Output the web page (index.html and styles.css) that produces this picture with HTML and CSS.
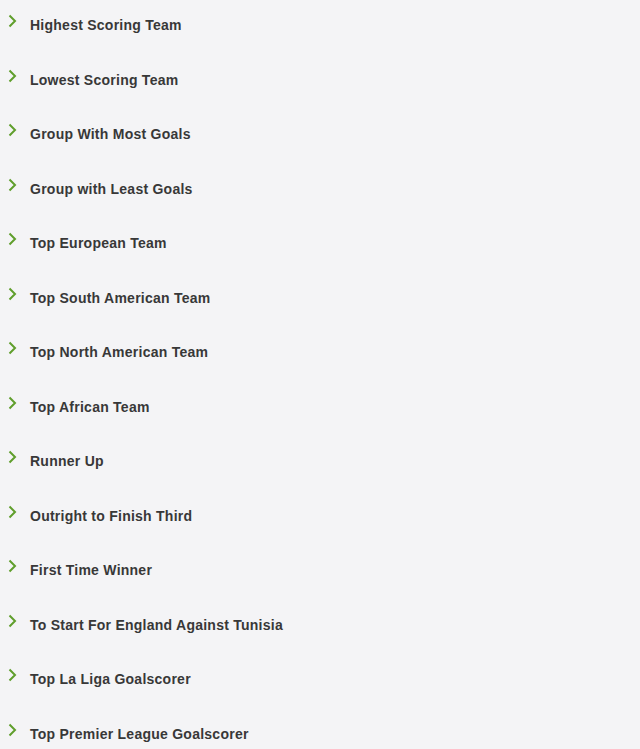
FILE: index.html
```html
<!DOCTYPE html>
<html lang="en">
<head>
    <meta charset="UTF-8">
    <meta name="viewport" content="width=device-width, initial-scale=1.0">
    <title>Markets</title>
    <link rel="stylesheet" href="styles.css">
</head>
<body>
    <ul class="markets">
        <li class="market"><svg class="chevron" viewBox="0 0 9 14"><polyline points="1.5,1.5 7,7 1.5,12.5"/></svg><span class="label">Highest Scoring Team</span></li>
        <li class="market"><svg class="chevron" viewBox="0 0 9 14"><polyline points="1.5,1.5 7,7 1.5,12.5"/></svg><span class="label">Lowest Scoring Team</span></li>
        <li class="market"><svg class="chevron" viewBox="0 0 9 14"><polyline points="1.5,1.5 7,7 1.5,12.5"/></svg><span class="label">Group With Most Goals</span></li>
        <li class="market"><svg class="chevron" viewBox="0 0 9 14"><polyline points="1.5,1.5 7,7 1.5,12.5"/></svg><span class="label">Group with Least Goals</span></li>
        <li class="market"><svg class="chevron" viewBox="0 0 9 14"><polyline points="1.5,1.5 7,7 1.5,12.5"/></svg><span class="label">Top European Team</span></li>
        <li class="market"><svg class="chevron" viewBox="0 0 9 14"><polyline points="1.5,1.5 7,7 1.5,12.5"/></svg><span class="label">Top South American Team</span></li>
        <li class="market"><svg class="chevron" viewBox="0 0 9 14"><polyline points="1.5,1.5 7,7 1.5,12.5"/></svg><span class="label">Top North American Team</span></li>
        <li class="market"><svg class="chevron" viewBox="0 0 9 14"><polyline points="1.5,1.5 7,7 1.5,12.5"/></svg><span class="label">Top African Team</span></li>
        <li class="market"><svg class="chevron" viewBox="0 0 9 14"><polyline points="1.5,1.5 7,7 1.5,12.5"/></svg><span class="label">Runner Up</span></li>
        <li class="market"><svg class="chevron" viewBox="0 0 9 14"><polyline points="1.5,1.5 7,7 1.5,12.5"/></svg><span class="label">Outright to Finish Third</span></li>
        <li class="market"><svg class="chevron" viewBox="0 0 9 14"><polyline points="1.5,1.5 7,7 1.5,12.5"/></svg><span class="label">First Time Winner</span></li>
        <li class="market"><svg class="chevron" viewBox="0 0 9 14"><polyline points="1.5,1.5 7,7 1.5,12.5"/></svg><span class="label">To Start For England Against Tunisia</span></li>
        <li class="market"><svg class="chevron" viewBox="0 0 9 14"><polyline points="1.5,1.5 7,7 1.5,12.5"/></svg><span class="label">Top La Liga Goalscorer</span></li>
        <li class="market"><svg class="chevron" viewBox="0 0 9 14"><polyline points="1.5,1.5 7,7 1.5,12.5"/></svg><span class="label">Top Premier League Goalscorer</span></li>
    </ul>
</body>
</html>
```

FILE: styles.css
```css
/* Base */
body {
    margin: 0;
    background: #f4f4f6;
    font-family: 'Liberation Sans', Arial, sans-serif;
    color: #383838;
    overflow: hidden;
}
.markets {
    list-style: none;
    margin: 0;
    padding: 15px 0 0 0;
    display: flex;
    flex-direction: column;
    gap: 34.5px;
}
.market {
    display: flex;
    align-items: center;
    height: 20px;
    padding-left: 8px;
}
.chevron {
    width: 9px;
    height: 14px;
    margin-top: -8px;
    flex-shrink: 0;
    fill: none;
    stroke: #5f9e2c;
    stroke-width: 2;
}
.label {
    margin-left: 13px;
    font-size: 14px;
    font-weight: bold;
    line-height: 20px;
    letter-spacing: 0.25px;
}
```
